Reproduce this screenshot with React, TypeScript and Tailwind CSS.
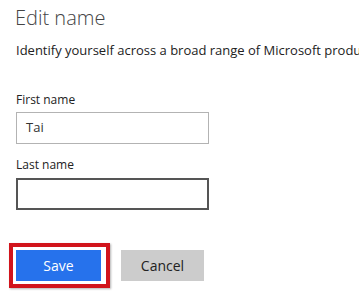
import React from 'react';

const App: React.FC = () => {
	return (
		<div className="w-[359px] h-[292px] overflow-hidden bg-white pl-4 font-['Open_Sans','Noto_Sans',sans-serif]">
			{/* Heading */}
			<h1 className="mt-[4px] -ml-[1px] text-[20px] font-light leading-[28px] text-[#444]">Edit name</h1>
			<p className="mt-[9px] whitespace-nowrap text-[13px] leading-[18px] text-[#222]">
				Identify yourself across a broad range of Microsoft products and services.
			</p>

			{/* Fields */}
			<div className="mt-[33px] w-[193px]">
				<label className="block text-[12px] leading-[16px] text-[#222]">First name</label>
				<div className="mt-[4px] flex h-[32px] items-center border border-[#b3b3b3] px-[9px] text-[13px] text-[#333]">Tai</div>
				<label className="mt-[13px] block text-[12px] leading-[16px] text-[#222]">Last name</label>
				<div className="mt-[5px] h-[32px] border-2 border-[#555]" />
			</div>

			{/* Actions */}
			<div className="mt-[33px] flex items-start gap-[11px]">
				<div className="-ml-[7px] border-[4px] border-[#d1141c] py-[3px] pl-[3px] pr-[5px] shadow-[1px_1px_2px_rgba(0,0,0,0.3)]">
					<button className="block h-[31px] w-[85px] bg-[#2672ec] text-[14px] text-white">Save</button>
				</div>
				<button className="mt-[7px] h-[31px] w-[83px] bg-[#cccccc] text-[14px] text-[#222]">Cancel</button>
			</div>
		</div>
	);
};

export default App;
